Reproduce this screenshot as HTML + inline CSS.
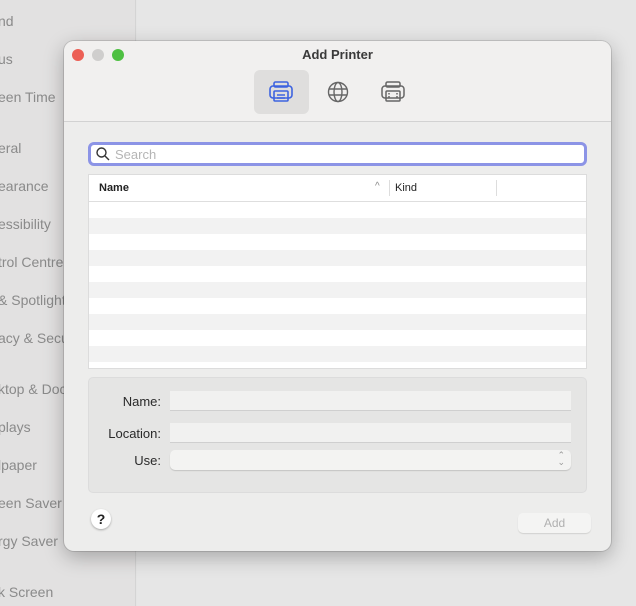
<!DOCTYPE html>
<html><head><style>
*{margin:0;padding:0;box-sizing:border-box}
body{width:636px;height:606px;overflow:hidden;background:#e4e4e4;font-family:"Liberation Sans",sans-serif;position:relative}
.side{position:absolute;left:0;top:0;width:136px;height:606px;background:#e2e1e1;border-right:1px solid #d4d4d4}
.right{position:absolute;left:137px;top:0;right:0;height:606px;background:#e6e6e6}
.side div{position:absolute;left:-2px;font-size:14px;color:#8a8a8a;white-space:nowrap}
.dlg{position:absolute;left:64px;top:41px;width:547px;height:510px;background:#ededec;border-radius:10px;box-shadow:0 6px 20px rgba(0,0,0,.28),0 0 0 1px rgba(0,0,0,.12);overflow:hidden}
.tb{position:absolute;left:0;top:0;width:100%;height:81px;background:#f1f0ef;border-bottom:1px solid #d2d2d2}
.dot{position:absolute;top:8px;width:12px;height:12px;border-radius:50%}
.title{position:absolute;top:6px;left:0;width:100%;text-align:center;font-size:13px;font-weight:bold;color:#3a3a3a}
.sel{position:absolute;left:190px;top:29px;width:55px;height:44px;background:#dfdedd;border-radius:6px}
.search{position:absolute;left:24px;top:101px;width:499px;height:24px;border:3px solid #8c94e6;border-radius:6px;background:#fff}
.search span{position:absolute;left:24px;top:2px;font-size:13px;color:#b5b5b5}
.tbl{position:absolute;left:24px;top:133px;width:499px;height:195px;background:#fff;border:1px solid #dcdcdc;overflow:hidden}
.hd{height:27px;border-bottom:1px solid #dedede;position:relative;font-size:11px;font-weight:bold;color:#222}
.row{height:16px}
.row:nth-child(even){background:#f2f2f2}
.box{position:absolute;left:24px;top:336px;width:499px;height:116px;background:#e5e5e4;border:1px solid #dcdcdc;border-radius:5px}
.lbl{position:absolute;font-size:13px;color:#2a2a2a;text-align:right;width:70px}
.fld{position:absolute;left:81px;width:401px;height:20px;background:#f1f1f0;border-bottom:1px solid #cfcfcf}
</style></head><body>
<div class="side">
<div style="top:13px">nd</div><div style="top:51px">us</div><div style="top:89px">een Time</div>
<div style="top:140px">eral</div><div style="top:178px">earance</div><div style="top:216px">essibility</div>
<div style="top:254px">trol Centre</div><div style="top:292px">&amp; Spotlight</div><div style="top:330px">acy &amp; Security</div>
<div style="top:381px">ktop &amp; Dock</div><div style="top:419px">plays</div><div style="top:457px">lpaper</div>
<div style="top:495px">een Saver</div><div style="top:533px">rgy Saver</div><div style="top:584px">k Screen</div>
</div>
<div class="right"></div>
<div class="dlg">
<div class="tb">
<div class="dot" style="left:8px;background:#ec5f55"></div>
<div class="dot" style="left:28px;background:#cfcecd"></div>
<div class="dot" style="left:48px;background:#4ec042"></div>
<div class="title">Add Printer</div>
<div class="sel"></div>
<svg style="position:absolute;left:205px;top:40px" width="24" height="22" viewBox="0 0 24 22" fill="none" stroke="#3d63e0" stroke-width="1.6"><rect x="5" y="1" width="14" height="5" rx="1.5"/><rect x="1" y="5" width="22" height="12" rx="3"/><rect x="5" y="10" width="14" height="10" rx="1"/><line x1="8" y1="14" x2="16" y2="14"/><line x1="8" y1="17" x2="16" y2="17"/></svg>
<svg style="position:absolute;left:263px;top:40px" width="22" height="22" viewBox="0 0 22 22" fill="none" stroke="#666" stroke-width="1.4"><circle cx="11" cy="11" r="9.5"/><ellipse cx="11" cy="11" rx="4" ry="9.5"/><path d="M2 8h18M2 14h18"/></svg>
<svg style="position:absolute;left:317px;top:40px" width="24" height="22" viewBox="0 0 24 22" fill="none" stroke="#666" stroke-width="1.5"><rect x="5" y="1" width="14" height="5" rx="1.5"/><rect x="1" y="5" width="22" height="12" rx="3"/><rect x="5" y="10" width="14" height="10" rx="1"/><path d="M8 12v6M16 12v6" stroke-dasharray="1.5 1.5"/></svg>
</div>
<div class="search">
<svg style="position:absolute;left:5px;top:2px" width="14" height="14" viewBox="0 0 14 14" fill="none" stroke="#333" stroke-width="1.4"><circle cx="5.5" cy="5.5" r="4.5"/><line x1="9" y1="9" x2="13" y2="13"/></svg>
<span>Search</span></div>
<div class="tbl">
<div class="hd"><span style="position:absolute;left:10px;top:7px">Name</span>
<span style="position:absolute;left:286px;top:6px;font-weight:normal;color:#888;font-size:10px">^</span>
<span style="position:absolute;left:300px;top:5px;width:1px;height:16px;background:#ddd"></span>
<span style="position:absolute;left:306px;top:7px;font-weight:normal">Kind</span>
<span style="position:absolute;left:407px;top:5px;width:1px;height:16px;background:#ddd"></span></div>
<div><div class="row"></div><div class="row"></div><div class="row"></div><div class="row"></div><div class="row"></div><div class="row"></div><div class="row"></div><div class="row"></div><div class="row"></div><div class="row"></div><div class="row"></div><div class="row"></div></div>
</div>
<div class="box">
<div class="lbl" style="top:16px;left:2px">Name:</div><div class="fld" style="top:13px"></div>
<div class="lbl" style="top:48px;left:2px">Location:</div><div class="fld" style="top:45px"></div>
<div class="lbl" style="top:75px;left:2px">Use:</div><div class="fld" style="top:72px;border-radius:5px;border:none;box-shadow:0 1px 1px rgba(0,0,0,.15);background:#f3f3f2"><span style="position:absolute;right:6px;top:2px;font-size:9px;color:#999;line-height:7px">⌃<br>⌄</span></div>
</div>
<div style="position:absolute;left:27px;top:468px;width:20px;height:20px;border-radius:50%;background:#fff;box-shadow:0 1px 2px rgba(0,0,0,.3);text-align:center;font-size:14px;font-weight:bold;line-height:20px;color:#222">?</div>
<div style="position:absolute;left:454px;top:472px;width:73px;height:20px;border-radius:5px;background:#f4f4f3;box-shadow:0 1px 1px rgba(0,0,0,.12);text-align:center;font-size:12px;line-height:20px;color:#b0b0b0">Add</div>
</div>
</body></html>
